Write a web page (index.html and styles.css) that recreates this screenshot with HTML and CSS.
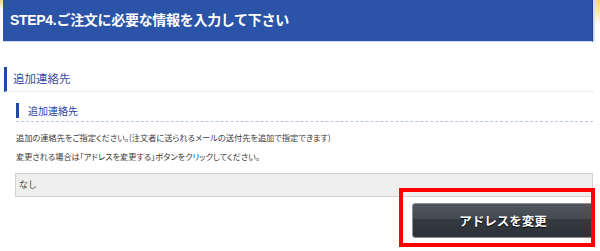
FILE: index.html
```html
<!DOCTYPE html>
<html lang="ja">
<head>
    <meta charset="UTF-8">
    <meta name="viewport" content="width=device-width, initial-scale=1.0">
    <title>STEP4</title>
    <link rel="stylesheet" href="styles.css">
</head>
<body>
    <div class="page">
        <h1 class="step_title">STEP4.ご注文に必要な情報を入力して下さい</h1>

        <div class="section">
            <h2 class="section_title">追加連絡先</h2>

            <div class="box">
                <h3 class="box_title"><span>追加連絡先</span></h3>
                <p class="note">追加の連絡先をご指定ください。(注文者に送られるメールの送付先を追加で指定できます)<br>
                変更される場合は「アドレスを変更する」ボタンをクリックしてください。</p>
                <div class="addr">なし</div>
                <div class="btn_area">
                    <button class="btn_change">アドレスを変更</button>
                    <span class="mark"></span>
                </div>
            </div>
        </div>
    </div>
</body>
</html>
```

FILE: styles.css
```css
*{
    box-sizing: border-box;
}
body{
    margin: 0;
    background-color: #fff;
    font-family: "Noto Sans CJK JP", sans-serif;
    color: #333;
}
.page{
    width: 600px;
    height: 251px;
    padding: 0 7px 0 4px;
    overflow: hidden;
    background:
        radial-gradient(circle at 0 0, #f3cf6a 0, rgba(255,255,255,0) 10px),
        radial-gradient(circle at 100% 0, #f6d56e 0, rgba(255,255,255,0) 26px),
        #fff;
}

/* ステップ見出し */
.step_title{
    margin: 0 0 0 -1px;
    height: 42px;
    padding-left: 7px;
    background-color: #2b53a8;
    border-right: 1px solid #1d3f95;
    border-bottom: 1px solid #c9d6f0;
    box-shadow: 2px 0 0 #d3def3;
    color: #fff;
    font-family: "Liberation Sans", "Noto Sans CJK JP", sans-serif;
    font-size: 14px;
    font-weight: bold;
    line-height: 41px;
    letter-spacing: -0.3px;
}

/* 追加連絡先 */
.section{
    padding-top: 25px;
}
.section_title{
    margin: 0;
    height: 25px;
    padding-left: 6px;
    border-left: 3px solid #2146ad;
    border-bottom: 1px dotted #d4d8e2;
    color: #3a4a9c;
    font-size: 11.5px;
    font-weight: normal;
    line-height: 23px;
}
.box{
    padding-left: 12px;
}
.box_title{
    margin: 11px 0 0;
    padding-bottom: 3px;
    border-bottom: 1px dashed #b9c5e5;
}
.box_title span{
    display: block;
    height: 15px;
    padding-left: 9px;
    border-left: 3px solid #2146ad;
    color: #2d409b;
    font-size: 10px;
    font-weight: normal;
    line-height: 15px;
}
.note{
    margin: 6px 0 0;
    font-size: 8.2px;
    line-height: 19px;
    font-feature-settings: "palt";
    color: #3a3a3a;
}
.addr{
    margin: 7px 0 0 -1px;
    height: 24px;
    padding-left: 3px;
    background-color: #efefef;
    border: 1px solid #d2d2d2;
    font-size: 9px;
    line-height: 22px;
    color: #444;
}

/* ボタン */
.btn_area{
    position: relative;
    display: flex;
    justify-content: flex-end;
    margin-top: 6px;
}
.btn_change{
    width: 182px;
    height: 35px;
    margin-right: -1px;
    background: linear-gradient(#50575f, #444a52 45%, #353a41 47%, #2d3238);
    border: 1px solid #8c9096;
    border-radius: 3px;
    color: #fff;
    font-family: "Noto Sans CJK JP", sans-serif;
    font-size: 12.5px;
    font-weight: bold;
    text-shadow: 0 1px 1px #000;
}
.mark{
    position: absolute;
    left: 383px;
    top: -15px;
    width: 196px;
    height: 59px;
    border: 4px solid #f00;
}
```
